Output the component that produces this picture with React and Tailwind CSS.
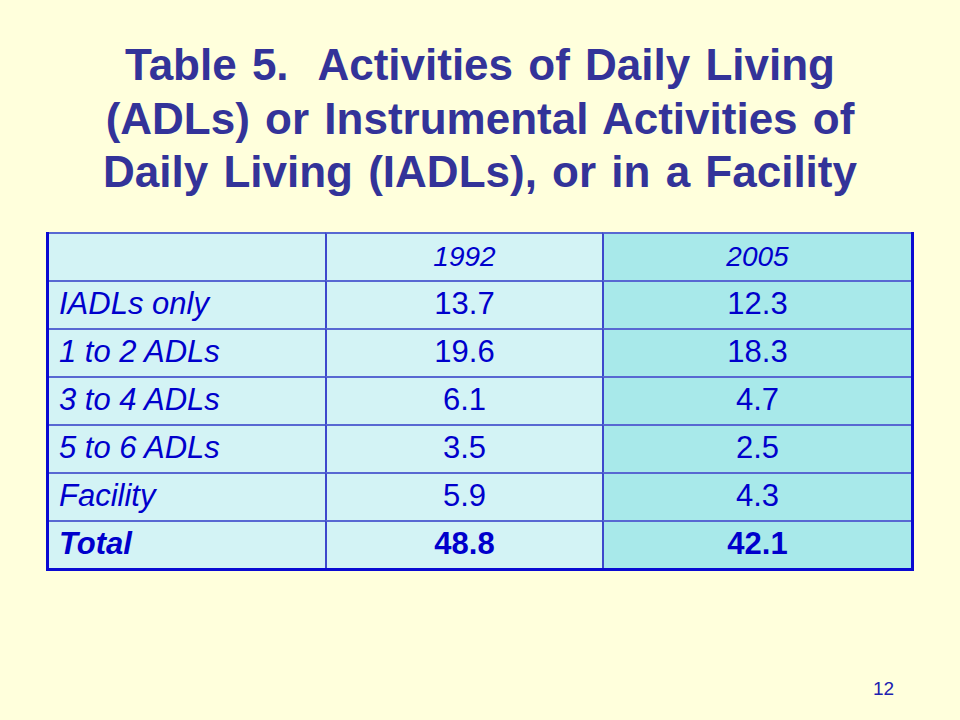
import React from 'react';

const rows = [
  { label: 'IADLs only', a: '13.7', b: '12.3' },
  { label: '1 to 2 ADLs', a: '19.6', b: '18.3' },
  { label: '3 to 4 ADLs', a: '6.1', b: '4.7' },
  { label: '5 to 6 ADLs', a: '3.5', b: '2.5' },
  { label: 'Facility', a: '5.9', b: '4.3' },
];

const Row = ({ label, a, b, bold, header }) => {
  const weight = bold ? 'font-bold' : 'font-normal';
  const num = header ? 'italic text-[28px]' : 'text-[31px]';
  return (
    <>
      <div className={`h-[48px] flex items-center pl-[10px] bg-[#d3f3f5] border-t-2 border-[#5868d2] italic text-[31px] ${weight}`}>
        {label}
      </div>
      <div className={`h-[48px] flex items-center justify-center bg-[#d3f3f5] border-t-2 border-l-2 border-[#5868d2] border-l-[#3d48cc] ${num} ${weight}`}>
        {a}
      </div>
      <div className={`h-[48px] flex items-center justify-center bg-[#a8e9ea] border-t-2 border-l-2 border-[#5868d2] border-l-[#3d48cc] ${num} ${weight}`}>
        {b}
      </div>
    </>
  );
};

export default function App() {
  return (
    <div className="w-[960px] h-[720px] bg-[#ffffdc] relative font-['Liberation_Sans',Arial,sans-serif] overflow-hidden">
      <div className="pt-[38px] text-center text-[#333399] font-bold text-[44px] leading-[53.5px] [word-spacing:3px]">
        <div>Table 5.&nbsp; Activities of Daily Living</div>
        <div>(ADLs) or Instrumental Activities of</div>
        <div>Daily Living (IADLs), or in a Facility</div>
      </div>

      <div className="mt-[33px] ml-[46px] w-[868px] grid grid-cols-[276px_277px_309px] border-l-[3px] border-r-[3px] border-b-[3px] border-[#0a0ad2] text-[#0000cc]">
        <Row label="" a="1992" b="2005" header />
        {rows.map((r) => (
          <Row key={r.label} {...r} />
        ))}
        <Row label="Total" a="48.8" b="42.1" bold />
      </div>

      <div className="absolute left-[873px] top-[675px] text-[19px] text-[#2020b0]">12</div>
    </div>
  );
}
